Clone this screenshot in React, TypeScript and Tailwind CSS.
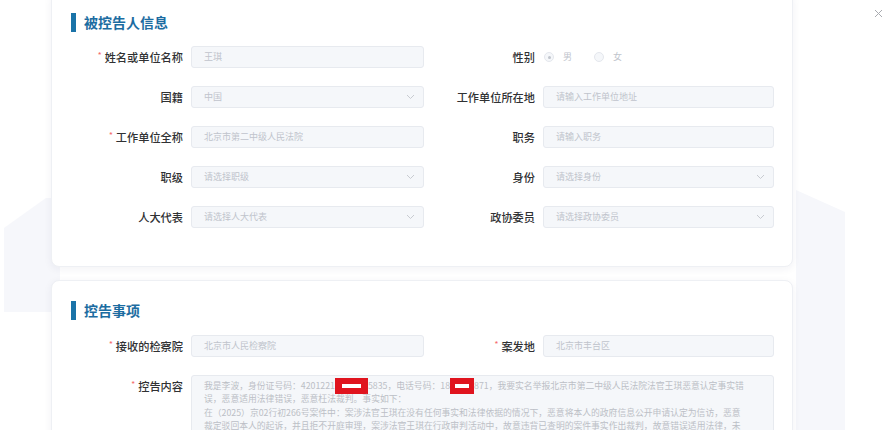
import React from "react";

const FONT = { fontFamily: '"Noto Sans CJK SC", "Noto Sans", sans-serif' };

function Chevron() {
  return (
    <svg width="9" height="6" viewBox="0 0 9 6" fill="none">
      <path d="M1 1l3.5 3.5L8 1" stroke="#c8cbd1" strokeWidth="1" />
    </svg>
  );
}

function Box({
  text,
  select,
  width = "w-[233px]",
}: {
  text: string;
  select?: boolean;
  width?: string;
}) {
  return (
    <div
      className={`${width} flex h-[22px] items-center justify-between rounded-[3px] border border-[#e7eaef] bg-[#f5f7fa] pl-[12px] pr-[8px] text-[9px] text-[#c0c4cc]`}
    >
      <span>{text}</span>
      {select && <Chevron />}
    </div>
  );
}

function Label({
  text,
  required,
  width,
}: {
  text: string;
  required?: boolean;
  width: string;
}) {
  return (
    <div
      className={`${width} flex shrink-0 items-center justify-end pr-[8px] text-[11.2px] font-medium text-[#303133]`}
    >
      {required && (
        <span className="mr-[3px] -mt-[4px] text-[8px] text-[#f56c6c]">*</span>
      )}
      {text}
    </div>
  );
}

function Row({ children }: { children: React.ReactNode }) {
  return <div className="flex h-[22px] items-center">{children}</div>;
}

function Title({ text }: { text: string }) {
  return (
    <div className="flex h-[19px] items-center pl-[19px]">
      <div className="h-[19px] w-[5px] bg-[#1a73a8]" />
      <div className="ml-[8px] text-[14px] font-bold text-[#1c6ca1]">{text}</div>
    </div>
  );
}

function Radio({ label, checked }: { label: string; checked?: boolean }) {
  return (
    <div className="mr-[22px] flex items-center">
      <div className="flex h-[10px] w-[10px] items-center justify-center rounded-full border border-[#e4e7ed] bg-[#f5f7fa]">
        {checked && <div className="h-[3px] w-[3px] rounded-full bg-[#c0c4cc]" />}
      </div>
      <span className="ml-[9px] text-[9px] text-[#c0c4cc]">{label}</span>
    </div>
  );
}

function Redact({ w, bar }: { w: string; bar: string }) {
  return (
    <span className={`${w} inline-flex h-[16px] items-center justify-center bg-[#e0141e]`}>
      <span className={`${bar} h-[4px] bg-white`} />
    </span>
  );
}

export default function App() {
  return (
    <div
      className="relative h-[430px] w-[890px] overflow-hidden bg-white"
      style={FONT}
    >
      <svg className="absolute left-0 top-0" width="890" height="430">
        <polygon points="4,228 46,198 60,198 60,312 4,312" fill="#f6f7fb" />
        <polygon points="796,190 845,212 845,430 796,430" fill="#f6f7fb" />
      </svg>

      <svg className="absolute left-[874px] top-[9px]" width="9" height="9" viewBox="0 0 9 9">
        <path d="M1 1l7 7M8 1l-7 7" stroke="#a9abb0" strokeWidth="1" />
      </svg>

      <div className="relative flex flex-col gap-[13px] pl-[51px]">
        <div className="-mt-[8px] w-[742px] rounded-[8px] border border-[#eef0f4] bg-white pb-[38px] pt-[20px] shadow-[0_2px_8px_rgba(30,40,80,0.06)]">
          <Title text="被控告人信息" />
          <div className="mt-[14px] flex flex-col gap-[18px] pl-[11px]">
            <Row>
              <Label text="姓名或单位名称" required width="w-[128px]" />
              <Box text="王琪" />
              <Label text="性别" width="w-[119px]" />
              <div className="flex items-center pl-[1px]">
                <Radio label="男" checked />
                <Radio label="女" />
              </div>
            </Row>
            <Row>
              <Label text="国籍" width="w-[128px]" />
              <Box text="中国" select />
              <Label text="工作单位所在地" width="w-[119px]" />
              <Box text="请输入工作单位地址" width="w-[231px]" />
            </Row>
            <Row>
              <Label text="工作单位全称" required width="w-[128px]" />
              <Box text="北京市第二中级人民法院" />
              <Label text="职务" width="w-[119px]" />
              <Box text="请输入职务" width="w-[231px]" />
            </Row>
            <Row>
              <Label text="职级" width="w-[128px]" />
              <Box text="请选择职级" select />
              <Label text="身份" width="w-[119px]" />
              <Box text="请选择身份" select width="w-[231px]" />
            </Row>
            <Row>
              <Label text="人大代表" width="w-[128px]" />
              <Box text="请选择人大代表" select />
              <Label text="政协委员" width="w-[119px]" />
              <Box text="请选择政协委员" select width="w-[231px]" />
            </Row>
          </div>
        </div>

        <div className="w-[742px] rounded-[8px] border border-[#eef0f4] bg-white pb-[30px] pt-[20px] shadow-[0_2px_8px_rgba(30,40,80,0.06)]">
          <Title text="控告事项" />
          <div className="mt-[15px] flex flex-col gap-[18px] pl-[11px]">
            <Row>
              <Label text="接收的检察院" required width="w-[128px]" />
              <Box text="北京市人民检察院" />
              <Label text="案发地" required width="w-[119px]" />
              <Box text="北京市丰台区" width="w-[231px]" />
            </Row>
            <div className="flex items-start">
              <div className="flex h-[22px] items-center">
                <Label text="控告内容" required width="w-[128px]" />
              </div>
              <div className="h-[90px] w-[583px] overflow-hidden rounded-[3px] border border-[#e7eaef] bg-[#f5f7fa] pl-[12px] pt-[3px] text-[8.8px] text-[#bcbfc6]">
                <div className="flex h-[13.3px] items-center whitespace-nowrap">
                  我是李波，身份证号码：4201221
                  <Redact w="w-[33px]" bar="w-[19px]" />
                  5835，电话号码：18
                  <Redact w="w-[24px]" bar="w-[14px]" />
                  871，我要实名举报北京市第二中级人民法院法官王琪恶意认定事实错
                </div>
                <div className="h-[13.3px] whitespace-nowrap leading-[13.3px]">
                  误，恶意适用法律错误，恶意枉法裁判。事实如下：
                </div>
                <div className="h-[13.3px] whitespace-nowrap leading-[13.3px]">
                  在（2025）京02行初266号案件中：案涉法官王琪在没有任何事实和法律依据的情况下，恶意将本人的政府信息公开申请认定为信访，恶意
                </div>
                <div className="h-[13.3px] whitespace-nowrap leading-[13.3px]">
                  裁定驳回本人的起诉，并且拒不开庭审理，案涉法官王琪在行政审判活动中，故意违背已查明的案件事实作出裁判，故意错误适用法律，未
                </div>
              </div>
            </div>
          </div>
        </div>
      </div>
    </div>
  );
}
